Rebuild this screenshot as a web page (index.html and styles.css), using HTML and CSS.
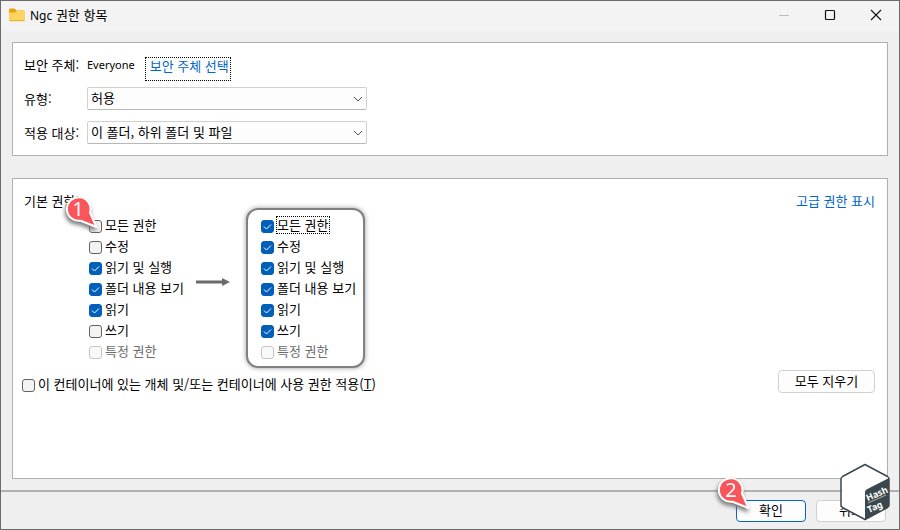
FILE: index.html
```html
<!DOCTYPE html>
<html lang="ko">
<head>
    <meta charset="UTF-8">
    <title>Ngc 권한 항목</title>
    <link rel="stylesheet" href="styles.css">
</head>
<body>
    <div class="window">
        <header class="titlebar">
            <svg class="folder" viewBox="0 0 16 14" width="16" height="14">
                <path d="M0 2a1.500 1.500 0 0 1 1.500-1.500h4l2 2H14.500a1.500 1.500 0 0 1 1.500 1.500v3H0z" fill="#e9a10c"/>
                <path d="M0 5.500a1 1 0 0 1 1-1h5l2-1.500h7a1 1 0 0 1 1 1v8a1 1 0 0 1-1 1H1a1 1 0 0 1-1-1z" fill="#ffd45e"/>
                <path d="M.5 12.700h15" stroke="#e8ad2b"/>
            </svg>
            <h1><span class="latin-title">Ngc</span> 권한 항목</h1>
            <div class="window-buttons">
                <button type="button" aria-label="최소화" disabled>
                    <svg viewBox="0 0 12 12" width="12" height="12"><path d="M1 6.500h10" stroke="#bdbdbd"/></svg>
                </button>
                <button type="button" aria-label="최대화">
                    <svg viewBox="0 0 12 12" width="12" height="12"><rect x="1.500" y="1.500" width="9" height="9" rx="1" fill="none" stroke="#111" stroke-width="1.200"/></svg>
                </button>
                <button type="button" aria-label="닫기">
                    <svg viewBox="0 0 12 12" width="12" height="12"><path d="M1 1l10 10M11 1L1 11" stroke="#111" stroke-width="1.100"/></svg>
                </button>
            </div>
        </header>

        <main>
            <section class="panel principal">
                <div class="field">
                    <span class="label">보안 주체:</span>
                    <span class="latin">Everyone</span>
                    <a href="#" class="select-principal">보안 주체 선택</a>
                </div>
                <div class="field">
                    <label class="label" for="type">유형:</label>
                    <select id="type">
                        <option>허용</option>
                        <option>거부</option>
                    </select>
                </div>
                <div class="field">
                    <label class="label" for="target">적용 대상:</label>
                    <select id="target">
                        <option>이 폴더, 하위 폴더 및 파일</option>
                        <option>이 폴더만</option>
                    </select>
                </div>
            </section>

            <section class="panel permissions">
                <div class="panel-head">
                    <span>기본 권한:</span>
                    <a href="#">고급 권한 표시</a>
                </div>

                <div class="columns">
                    <div class="perm-list">
                        <label class="check"><input type="checkbox"><span>모든 권한</span></label>
                        <label class="check"><input type="checkbox"><span>수정</span></label>
                        <label class="check"><input type="checkbox" checked><span>읽기 및 실행</span></label>
                        <label class="check"><input type="checkbox" checked><span>폴더 내용 보기</span></label>
                        <label class="check"><input type="checkbox" checked><span>읽기</span></label>
                        <label class="check"><input type="checkbox"><span>쓰기</span></label>
                        <label class="check"><input type="checkbox" disabled><span>특정 권한</span></label>
                        <svg class="pin pin-first" viewBox="0 0 36 36" width="36" height="36">
                            <path d="M26 18.500A11.800 11.800 0 1 0 16.500 26.700L32.500 33z" fill="#f9555a" stroke="#fff" stroke-width="2" stroke-linejoin="round"/>
                            <text x="14" y="22" text-anchor="middle">1</text>
                        </svg>
                    </div>

                    <svg class="arrow" viewBox="0 0 34 8" width="34" height="8">
                        <path d="M0 2.500h26V0l8 4l-8 4V5.500H0z" fill="#6b6b6b"/>
                    </svg>

                    <div class="perm-list result">
                        <label class="check"><input type="checkbox" checked><span class="focused">모든 권한</span></label>
                        <label class="check"><input type="checkbox" checked><span>수정</span></label>
                        <label class="check"><input type="checkbox" checked><span>읽기 및 실행</span></label>
                        <label class="check"><input type="checkbox" checked><span>폴더 내용 보기</span></label>
                        <label class="check"><input type="checkbox" checked><span>읽기</span></label>
                        <label class="check"><input type="checkbox" checked><span>쓰기</span></label>
                        <label class="check"><input type="checkbox" disabled><span>특정 권한</span></label>
                    </div>
                </div>

                <div class="panel-foot">
                    <label class="check"><input type="checkbox"><span>이 컨테이너에 있는 개체 및/또는 컨테이너에 사용 권한 적용(<u>T</u>)</span></label>
                    <button type="button" class="btn btn-clear">모두 지우기</button>
                </div>
            </section>
        </main>

        <footer class="actions">
            <div class="ok">
                <button type="button" class="btn btn-default">확인</button>
                <svg class="pin pin-second" viewBox="0 0 36 36" width="36" height="36">
                    <path d="M26 18.500A11.800 11.800 0 1 0 16.500 26.700L32.500 33z" fill="#f9555a" stroke="#fff" stroke-width="2" stroke-linejoin="round"/>
                    <text x="15" y="22" text-anchor="middle">2</text>
                </svg>
            </div>
            <button type="button" class="btn">취소</button>
            <svg class="watermark" viewBox="0 0 50 58" width="50" height="58">
                <path d="M25 1.500L47.500 13.500Q49 14.500 49 16V42Q49 43.500 47.500 44.500L25 56.500L2.500 44.500Q1 43.500 1 42V16Q1 14.500 2.500 13.500z" fill="#fff" stroke="#3b474c" stroke-width="1.500" stroke-linejoin="round"/>
                <path d="M25 29Q25 27.500 26.500 26.500L49 15V42Q49 43.500 47.500 44.500L25 56.500z" fill="#3b474c"/>
                <text x="37" y="34" text-anchor="middle" transform="rotate(-24 37 31)">Hash</text>
                <path d="M28 40L46 32" stroke="#fff" stroke-width=".6"/>
                <text x="35" y="47" text-anchor="middle" transform="rotate(-24 35 44)">Tag</text>
            </svg>
        </footer>
    </div>
</body>
</html>
```
FILE: styles.css
```css
* {
    box-sizing: border-box;
}

body {
    margin: 0;
    font-family: "Noto Sans CJK KR", sans-serif;
    font-size: 13px;
    line-height: 16px;
    color: #000;
}

button, select, input {
    font: inherit;
    color: inherit;
    margin: 0;
}

a {
    color: #0066cc;
    text-decoration: none;
}

.window {
    display: flex;
    flex-direction: column;
    min-height: 100vh;
    border: 1px solid #6b6b6b;
    background: #efefef;
    overflow: hidden;
}

/* Title bar */
.titlebar {
    display: flex;
    align-items: center;
    height: 30px;
    padding: 0 0 2px 8px;
    background: #f3f3f3;
}

.titlebar h1 {
    margin: 0 0 0 5px;
    font-size: 13px;
    font-weight: normal;
}

.latin-title {
    font-family: "Noto Sans", sans-serif;
    font-size: 12px;
}

.latin {
    font-family: "Noto Sans", sans-serif;
    font-size: 11px;
}

.window-buttons {
    display: flex;
    margin-left: auto;
}

.window-buttons button {
    display: flex;
    align-items: center;
    justify-content: center;
    width: 46px;
    height: 28px;
    padding: 0;
    border: 0;
    background: none;
}

/* Panels */
main {
    display: flex;
    flex: 1;
    flex-direction: column;
    gap: 22px;
    padding: 11px;
}

.panel {
    border: 1px solid #b0b0b0;
    background: #fff;
}

.principal {
    display: flex;
    flex-direction: column;
    gap: 11px;
    padding: 10px 11px 11px;
}

.field {
    display: flex;
    align-items: center;
    height: 23px;
}

.label {
    width: 63px;
}

.select-principal {
    height: 24px;
    margin: 8px 0 0 10px;
    padding: 0 1px 0 4px;
    border: 1px dotted #000;
}

select {
    width: 280px;
    height: 23px;
    padding: 0 20px 1px 3px;
    border: 1px solid #d0d0d0;
    border-bottom-color: #b8b8b8;
    border-radius: 2px;
    appearance: none;
    background: #fdfdfd url("data:image/svg+xml,%3Csvg xmlns='http://www.w3.org/2000/svg' width='10' height='6'%3E%3Cpath d='M1 1l4 4l4-4' fill='none' stroke='%23555'/%3E%3C/svg%3E") no-repeat right 3px center;
}

/* Permissions */
.permissions {
    flex: 1;
    padding: 14px 12px 14px 9px;
}

.panel-head {
    display: flex;
    justify-content: space-between;
    padding-left: 2px;
}

.columns {
    display: flex;
    align-items: flex-start;
    padding-left: 67px;
}

.perm-list {
    position: relative;
    padding-top: 6px;
}

.check {
    display: flex;
    align-items: center;
    gap: 3px;
    height: 21px;
    white-space: nowrap;
}

.check input {
    width: 13px;
    height: 13px;
    margin-top: 2px;
    border: 1px solid #626262;
    border-radius: 3px;
    appearance: none;
    background: #f3f3f3;
}

.check span {
    padding-bottom: 2px;
}

.check input:checked {
    border-color: #005fb8;
    background: #005fb8 url("data:image/svg+xml,%3Csvg xmlns='http://www.w3.org/2000/svg' width='9' height='9'%3E%3Cpath d='M1 4.500l2.500 2.500l4.500-4.500' fill='none' stroke='white'/%3E%3C/svg%3E") no-repeat center;
}

.check input:disabled {
    border-color: #c5c5c5;
    background: #f9f9f9;
}

.check input:disabled + span {
    color: #6d6d6d;
}

.check .focused {
    padding: 0;
    margin-bottom: 2px;
    outline: 1px dotted #000;
}

.arrow {
    margin: 69px 16px 0 12px;
}

.result {
    margin-top: -1px;
    padding: 5px 7px 4px 13px;
    border: 2px solid #808080;
    border-radius: 12px;
    background: #fff;
    box-shadow: 0 0 5px #999;
}

.panel-foot {
    display: flex;
    align-items: flex-start;
    justify-content: space-between;
    margin-top: 2px;
}

.panel-foot .check {
    margin-top: 4px;
}

.btn {
    width: 70px;
    height: 22px;
    padding: 0 0 2px;
    border: 1px solid #d0d0d0;
    border-radius: 4px;
    background: #fdfdfd;
}

.btn-clear {
    width: 97px;
    height: 23px;
}

.btn-default {
    border-color: #0067c0;
}

/* Bottom bar */
.actions {
    position: relative;
    display: flex;
    justify-content: flex-end;
    gap: 10px;
    height: 39px;
    padding: 8px 13px 0;
    border-top: 2px solid #b0b0b0;
}

.ok {
    position: relative;
}

/* Numbered markers */
.pin {
    position: absolute;
    overflow: visible;
    filter: drop-shadow(-1px 3px 2px #777);
}

.pin text {
    fill: #fff;
    font-family: "Noto Sans", sans-serif;
    font-size: 20px;
}

.pin-first {
    top: -15px;
    left: -25px;
}

.pin-second {
    top: -25px;
    left: -20px;
}

.watermark {
    position: absolute;
    right: 9px;
    bottom: 8px;
}

.watermark text {
    fill: #fff;
    font-family: "Noto Sans", sans-serif;
    font-size: 9px;
    font-weight: bold;
}
```
